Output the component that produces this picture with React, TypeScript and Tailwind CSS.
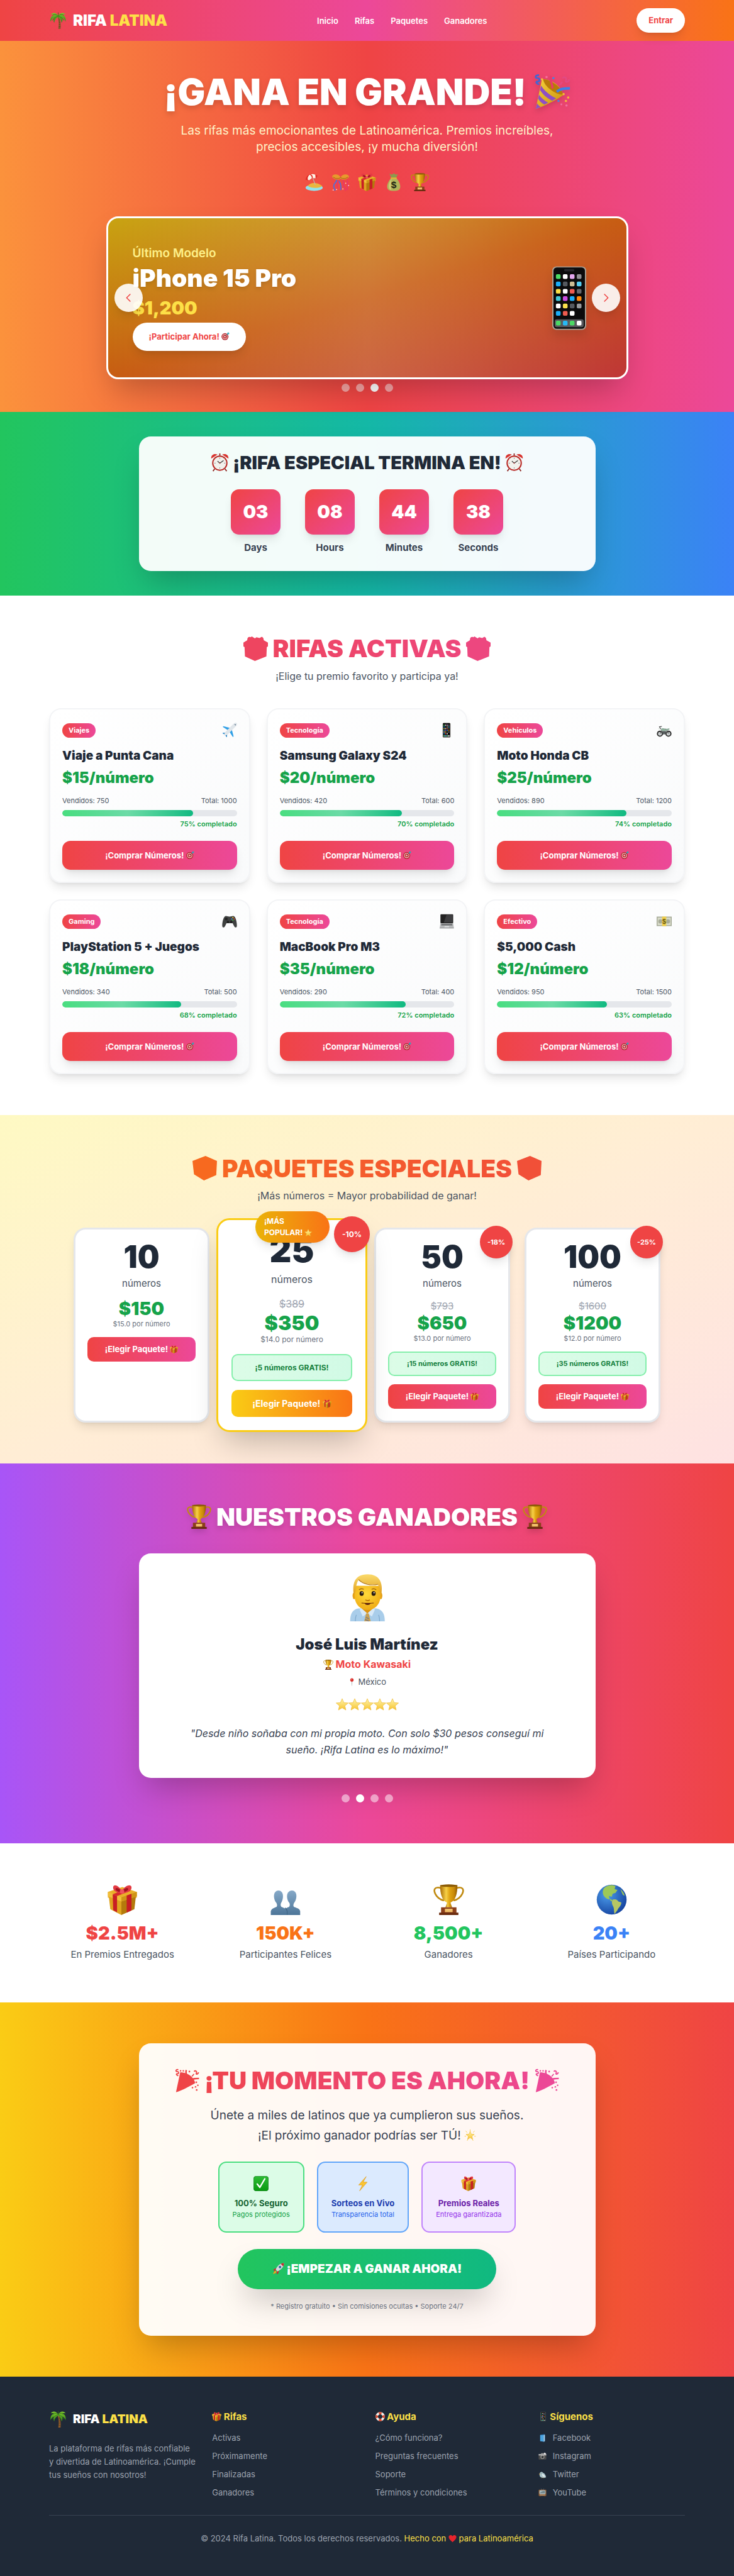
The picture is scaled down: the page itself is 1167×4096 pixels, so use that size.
import React from 'react';

/* ------------------------------------------------------------------ */
/* Icons: small colour drawings on a 32 x 32 grid                      */
/* ------------------------------------------------------------------ */

function Defs() {
  return (
    <svg width="0" height="0" className="absolute" aria-hidden="true">
      <defs>
        <linearGradient id="gold" x1="0" x2="1">
          <stop offset="0" stopColor="#a86b05" />
          <stop offset=".35" stopColor="#f7d046" />
          <stop offset=".55" stopColor="#e0a412" />
          <stop offset=".8" stopColor="#c98a08" />
          <stop offset="1" stopColor="#8f5a04" />
        </linearGradient>
        <linearGradient id="cone" x1="0" x2="1" y1="0" y2="1">
          <stop offset="0" stopColor="#f6d33c" />
          <stop offset="1" stopColor="#c98f0c" />
        </linearGradient>
        <linearGradient id="star" x1="0" x2="0" y1="0" y2="1">
          <stop offset="0" stopColor="#fff6b0" />
          <stop offset="1" stopColor="#f7c32e" />
        </linearGradient>
        <linearGradient id="steel" x1="0" x2="0" y1="0" y2="1">
          <stop offset="0" stopColor="#86a9c8" />
          <stop offset="1" stopColor="#4d7598" />
        </linearGradient>
        <linearGradient id="leaf" x1="0" x2="0" y1="0" y2="1">
          <stop offset="0" stopColor="#7fc52e" />
          <stop offset="1" stopColor="#2f8517" />
        </linearGradient>
        <radialGradient id="sea" cx=".35" cy=".35" r=".75">
          <stop offset="0" stopColor="#4b9bea" />
          <stop offset="1" stopColor="#123f9c" />
        </radialGradient>
        <radialGradient id="face" cx=".45" cy=".35" r=".75">
          <stop offset="0" stopColor="#ffd93a" />
          <stop offset="1" stopColor="#eda50f" />
        </radialGradient>
        <linearGradient id="hair" x1="0" x2="0" y1="0" y2="1">
          <stop offset="0" stopColor="#fbdb6c" />
          <stop offset="1" stopColor="#dd9a1c" />
        </linearGradient>
        <linearGradient id="check" x1="0" x2="0" y1="0" y2="1">
          <stop offset="0" stopColor="#2dbb35" />
          <stop offset="1" stopColor="#08990f" />
        </linearGradient>
      </defs>
    </svg>
  );
}

const icons = {
  palm: (
    <>
      <path d="M15 10c2 6 2.600 13 1.200 21h4c.8-8 0-15-3-21z" fill="#8a5a2b" />
      <path d="M17 15l2 .3M17.300 19l2.300.2M17.300 23l2.500.1M17 27l3 .1" stroke="#5f3c18" strokeWidth=".8" />
      <path
        d="M16 8C13 2 6 1 3 6c3-1 5 0 6 1-4 0-7 4-6.500 11 2-4 4-6 6-6.500-1 3-1 6 .5 8.500C10 15 12 12 16 10c3 2 5 5 6 10 2-3 2-6 1-8.500 3 1 5 3 6 7C30 12 28 7 23 7c1-1 3-2 6-1C26 1 19 2 16 8z"
        fill="url(#leaf)"
      />
      <path d="M16 9c-3-4-7-4-10-2M16 9c3-4 7-4 10-2M15 9c-4 1-7 3-9 7M17 9c4 1 7 3 9 7M16 9V2" stroke="#2b7414" strokeWidth=".9" fill="none" />
    </>
  ),
  party: (
    <>
      <path d="M7 5L1.500 31c5-1.500 16-6.500 24-12C24 11 16 5 7 5z" fill="url(#cone)" />
      <path d="M8 5c7 0 16 7 17.500 13.500C20 19 9 12 8 5z" fill="#b87a09" />
      <path d="M6.200 10.500C9 15 13 18.500 19.500 21.800l-3.500 2C10.500 21 7.500 18 5.300 14.500zM4.400 18.500c1.800 2.800 4.500 5.200 8 7l-3.200 1.700c-2.400-1.400-4.300-3-5.600-5.200zM2.700 26c.8 1.400 2 2.500 3.300 3.200l-4.500 1.800z" fill="#8e4fc4" />
      <path d="M16 13c1-4-3-6-1-11" stroke="#e9386a" strokeWidth="1.800" fill="none" />
      <path d="M20 16c3-3 7-3 11.500-3" stroke="#3d7fe8" strokeWidth="2.200" fill="none" />
      <path d="M4.500 1.500C1 1 .5 4 3 4s2.500 3 0 3 .5 3 1.500 2" stroke="#3f66d6" strokeWidth="1.500" fill="none" />
      <path d="M25 4c2-2 4 0 3 2s2 2 3-1M22 10c2 0 2-3 3-2" stroke="#e24a84" strokeWidth="1.300" fill="none" />
      <g fill="#f4b83c">
        <circle cx="7" cy="5" r="1" />
        <circle cx="26" cy="18" r="1" />
        <circle cx="30" cy="21" r="1" />
        <circle cx="28" cy="24" r="1" />
      </g>
      <g fill="#f26fa0">
        <circle cx="11" cy="3" r="1" />
        <circle cx="28.500" cy="28" r="1" />
        <circle cx="24" cy="27" r=".8" />
      </g>
      <circle cx="17" cy="4" r="1" fill="#4a82e0" />
      <circle cx="21.500" cy="24" r="1" fill="#4a82e0" />
    </>
  ),
  partyShape: (
    <g fill="currentColor" stroke="none">
      <path d="M7 5L1.500 31c5-1.500 16-6.500 25-12C25 11 16 5 7 5z" />
      <g fill="none" stroke="currentColor">
        <path d="M16 13c1-4-3-6-1-11M20 16c3-3 7-3 11.500-3" strokeWidth="2" />
        <path d="M4.500 1.500C1 1 .5 4 3 4s2.500 3 0 3 .5 3 1.500 2M25 4c2-2 4 0 3 2s2 2 3-1M22 10c2 0 2-3 3-2" strokeWidth="1.500" />
      </g>
      <circle cx="11" cy="3" r="1" />
      <circle cx="7.500" cy="3" r="1" />
      <circle cx="19" cy="4" r="1.100" />
      <circle cx="28" cy="18" r="1.100" />
      <circle cx="30" cy="22" r="1" />
      <circle cx="27" cy="24" r="1" />
      <circle cx="28.500" cy="28" r="1.100" />
      <circle cx="23" cy="25" r="1" />
    </g>
  ),
  beach: (
    <>
      <ellipse cx="16" cy="26" rx="15" ry="5.500" fill="#8fe3ee" />
      <path d="M5 23c3-6 16-8 25 0-4 4-20 4.500-25 0z" fill="#eab53e" />
      <path d="M13 7l5 14" stroke="#b9b9b9" strokeWidth="1.200" />
      <path d="M1 12C2 2 13-1 22 5l-3 5-7-1-6 5c-1-2-3-2-5-2z" fill="#e02c25" />
      <path d="M8 3c-3 3-4 6-3 9l2 1 5-4c0-3-2-5-4-6zM18 3C15 1.500 12 1.500 10 2.500c3 1 4 4 3.500 6.500l5 .5z" fill="#fff3e6" />
    </>
  ),
  confetti: (
    <>
      <path d="M1 7c1-6 12-6 15 1 3-7 14-7 15-1-4 5-11 6-15 3-4 3-11 2-15-3z" fill="#e8992d" />
      <path d="M3 7c3 3 9 4 13 1 4 3 10 2 13-1" stroke="#9c5a10" fill="none" />
      <path d="M9 12c0 6-5 5-5 11s3 3 2 8M12 13c3 4 6 8 4 17" stroke="#4b6fe0" strokeWidth="2" fill="none" />
      <path d="M13 13c-3 4-5 8-2 14M20 13c4 4-1 7 2 11s4 3 2 7M28 13v17" stroke="#e8346c" strokeWidth="1.800" fill="none" />
      <g fill="#ffd0d8">
        <circle cx="3" cy="30" r="1" />
        <circle cx="9" cy="29" r="1" />
        <circle cx="20" cy="28" r="1" />
        <circle cx="30" cy="22" r="1" />
        <circle cx="25" cy="18" r="1" />
      </g>
    </>
  ),
  gift: (
    <>
      <path d="M1 8l15-5 15 5v6H1z" fill="#eab02a" />
      <path d="M1.500 9L15 14.500V32L3.500 26z" fill="#e0a420" />
      <path d="M30.500 9L15 14.500V32l13.500-6z" fill="#b47a0c" />
      <path d="M1 8v4.500L15 18v-4.500zM31 8v4.500L15 18v-4.500z" fill="#f1be3c" />
      <path d="M15 13.500l16-5.500v4.500L15 18z" fill="#cf9517" />
      <path d="M6 10.500l4.500 1.800v17L6.500 27zM20.500 11.700l5-1.700v17.300l-5 2.300z" fill="#c81e24" />
      <path d="M6 10.500L20 5l4.500 1.800L10.500 12.300z" fill="#d8282c" />
      <path d="M15.500 7C12 1 7-.5 6.500 3s3 6 9 6.500C22 9 26 6.500 25.500 3S19 1 15.500 7z" fill="#e43b44" />
      <path d="M15.500 8C13 4 10 3 9 4.500s2.500 3.500 6.500 4c4-.5 7.500-2.500 6.500-4S18 4 15.500 8z" fill="#a1141f" />
      <circle cx="15.700" cy="7.500" r="2.300" fill="#ef5560" />
    </>
  ),
  giftShape: (
    <path
      fill="currentColor"
      d="M0 8l5-3c0-4 2-5 4.500-4L11 0l4 2.500L17 1l4 1 3-1.500c2 1 2.500 2.500 2.500 4.500L32 8v5l-1.500 1-.5 12-15 6-13-6L1.500 14 0 13z"
    />
  ),
  boxShape: <path fill="currentColor" d="M17 0L32 6.500 31 25 15 32 2 24 0 6.500z" />,
  money: (
    <>
      <path d="M9 1l4 2 4-2.500L20 3l4-1-3.500 7h-8z" fill="#8d9a4e" />
      <path d="M12 9h9c4 4 7 10 7 15 0 6-4 7.500-11.500 7.500S5 30 5 24c0-5 3-11 7-15z" fill="#b2b45a" />
      <path d="M13 10c-3 4-5 8-5 13 0 4 1 6 4 7-1-7-1-13 1-20z" fill="#d8d586" opacity=".8" />
      <rect x="11" y="8" width="11" height="2.500" rx="1.200" fill="#e3b438" />
      <text x="16.500" y="26.500" textAnchor="middle" fontSize="17" fontWeight="700" fontFamily="Liberation Sans" fill="#1f1f12">
        $
      </text>
    </>
  ),
  trophy: (
    <>
      <path d="M8 4C1 2 0 6 2 10s5 6 9 7M24 4c7-2 8 2 6 6s-5 6-9 7" stroke="#c08a10" strokeWidth="1.700" fill="none" />
      <path d="M7 1h18c0 9-2 16-7 18v3h-4v-3C9 17 7 10 7 1z" fill="url(#gold)" />
      <ellipse cx="16" cy="1.500" rx="9" ry="1.300" fill="#8c5b05" />
      <path d="M14 20h4l1.500 4h-7z" fill="url(#gold)" />
      <path d="M8 24h16v7H8z" fill="#8c3f1a" />
      <path d="M6 29.500h20V32H6z" fill="#6b2c10" />
      <path d="M12 25.500h8v3.500h-8z" fill="#f0bf6a" />
    </>
  ),
  phone: (
    <>
      <rect x="7.700" y=".5" width="16.600" height="31" rx="2" fill="#a9a196" />
      <rect x="8.300" y="1" width="15.400" height="30" rx="1.600" fill="#0b0b0c" />
      <rect x="13.500" y="1.800" width="5" height="1.100" rx=".5" fill="#26262b" />
      {[
        ['#4cd964', '#ffffff', '#e3a7ee', '#8e8e93'],
        ['#1badf8', '#55595f', '#cdbd94', '#55cdf2'],
        ['#fde047', '#ffffff', '#ef5c50', '#66696e'],
        ['#43c6d6', '#cc4ddf', '#1badf8', '#ff8a0c'],
        ['#ffffff', '#fbe04c', '#55595f', '#97999c'],
        ['#1badf8', '#ef5c50', '#ffffff', '#0b0b0c'],
      ].map((row, r) =>
        row.map((c, i) => (
          <rect key={`${r}-${i}`} x={9.500 + i * 3.400} y={4.300 + r * 3.600} width="2.300" height="2.300" rx=".6" fill={c} />
        )),
      )}
      <rect x="8.900" y="26.400" width="14.200" height="3.800" rx="1" fill="#5a5a5e" />
      {['#4cd964', '#27b9f5', '#4cd964', '#ffffff'].map((c, i) => (
        <rect key={i} x={9.500 + i * 3.400} y="27.100" width="2.300" height="2.300" rx=".6" fill={c} />
      ))}
    </>
  ),
  dart: (
    <>
      <circle cx="14" cy="18" r="13.500" fill="#b3252c" />
      <circle cx="14" cy="18" r="10" fill="#e9cfc9" />
      <circle cx="14" cy="18" r="7.500" fill="#c72c33" />
      <circle cx="14" cy="18" r="3" fill="#f3e7e2" />
      <path d="M14 18L25 7" stroke="#555" strokeWidth="2" />
      <path d="M22 10l1-6 5-4 .500 4 3.500.5-4 5z" fill="#2aa7b8" />
    </>
  ),
  clock: (
    <>
      <path d="M7 27l-3 4M25 27l3 4" stroke="#8f2a26" strokeWidth="2" />
      <path d="M1 9C0 3 6-1 12 2zM31 9c1-6-5-10-11-7z" fill="#d8332e" />
      <path d="M15 0h2v4h-2z" fill="#8f2a26" />
      <circle cx="16" cy="17" r="13.500" fill="#b92b27" />
      <circle cx="16" cy="17" r="11.300" fill="#f2f1ec" />
      <path d="M16 7.500v2M16 24.500v2M6.500 17h2M23.500 17h2" stroke="#777" />
      <path d="M16 17l-4-3.500M16 17l6.500-4.500" stroke="#333" strokeWidth="1.300" />
      <circle cx="16" cy="17" r="1" fill="#b92b27" />
    </>
  ),
  plane: (
    <>
      <path d="M20 12L3 7.500 1.500 9l14 9zM20 12l4.500 17 -1.500 1.500-9-14z" fill="#2f9fe6" />
      <path d="M9 21l-7 .5-1 1 6 3.500zM11 23l-.5 7-1 1L6 25z" fill="#2585c8" />
      <path d="M31 1c-2-1.500-5 0-7 2L7 20c-2 3-3 5-2 7 2 1 4 0 7-2L29 8c2-2 3.500-5 2-7z" fill="#dfe5ea" />
      <path d="M27 3.500l2 2" stroke="#4b6478" strokeWidth="1.800" />
    </>
  ),
  moto: (
    <>
      <circle cx="7" cy="23.500" r="6.500" fill="#2b2b2b" />
      <circle cx="7" cy="23.500" r="4" fill="#c9cdce" />
      <circle cx="25" cy="23.500" r="6.500" fill="#2b2b2b" />
      <circle cx="25" cy="23.500" r="4" fill="#c9cdce" />
      <path d="M8 23L12 14h8l5 9M9 20h13" stroke="#555" strokeWidth="2" fill="none" />
      <path d="M9 14c3-3 7-2 9 0l9-2v3l-9 3h-7z" fill="#8fb09d" />
      <path d="M11 18h9l-2 7h-5z" fill="#555b5c" />
      <path d="M9 14L6 9l5-1" stroke="#444" strokeWidth="1.600" fill="none" />
      <circle cx="5.500" cy="13" r="1.800" fill="#dfe7e0" />
    </>
  ),
  gamepad: (
    <>
      <path d="M7 5c3-1 5 1 9 1s6-2 9-1c4 1 7 14 6.500 21-.5 4-4 4-6 0l-3-6H9.500l-3 6c-2 4-5.500 4-6 0C0 19 3 6 7 5z" fill="#3f4140" />
      <circle cx="9" cy="11" r="3" fill="#232424" />
      <circle cx="12.500" cy="17" r="2.500" fill="#1d1e1e" />
      <circle cx="19.500" cy="17" r="2.500" fill="#1d1e1e" />
      <circle cx="23" cy="8" r="1.400" fill="#f0c22e" />
      <circle cx="26" cy="11" r="1.400" fill="#e04a32" />
      <circle cx="20.500" cy="11" r="1.400" fill="#3b87dd" />
      <circle cx="23" cy="13.500" r="1.400" fill="#46ad48" />
    </>
  ),
  laptop: (
    <>
      <rect x="3" y="1" width="27" height="19" rx="1.500" fill="#222" />
      <path d="M16 2h12.500v16.500H10z" fill="#3d3d3f" />
      <path d="M3 20h27l1.500 9.500H1.500z" fill="#b8babb" />
      <path d="M5 21.500h23l.5 3H4.500z" fill="#6b6d6f" />
      <path d="M12 26h9l.5 2.500h-10z" fill="#dcdedf" />
      <path d="M1.500 29.500h30v1.500h-30z" fill="#8b8d8f" />
    </>
  ),
  banknote: (
    <>
      <path d="M0 6h32v20H0z" fill="#a7ab98" />
      <rect x="2" y="8" width="28" height="16" fill="#d7dac8" />
      <circle cx="8" cy="16" r="4.500" fill="#a7ab98" />
      <circle cx="24" cy="16" r="4.500" fill="#a7ab98" />
      <path d="M11.500 6h9v20h-9z" fill="#efcf4b" />
      <text x="16" y="21" textAnchor="middle" fontSize="14" fontWeight="700" fontFamily="Liberation Sans" fill="#6b5a12">
        $
      </text>
    </>
  ),
  star: (
    <path
      d="M16 1.500l4.300 10.200 11 .9-8.400 7.200 2.600 10.700L16 24.800l-9.500 5.700 2.600-10.700L.7 12.600l11-.9z"
      fill="url(#star)"
      stroke="#eebc3a"
      strokeWidth="1.200"
    />
  ),
  man: (
    <>
      <path d="M4.800 31.200c0-5 1.600-7.700 5.400-8.400h11.600c3.900.7 5.600 3.400 5.600 8.400z" fill="#a9cdea" />
      <path d="M8.200 31.200c0-2 .2-3.200.7-4.200M24 31.200c0-2-.2-3.200-.7-4.200" stroke="#7fa9cc" strokeWidth=".5" fill="none" />
      <path d="M12.500 20h7v4.500L16 27l-3.500-2.500z" fill="#dd9413" />
      <path d="M12 22.500l4 3.500-3 2-2-4.500zM20 22.500L16 26l3 2 2-4.500z" fill="#d8e9f8" />
      <path d="M15.200 26h1.700l1.300 5.200H14z" fill="#c9a052" />
      <path d="M15 28.500l2 1M14.500 30l2.500 1" stroke="#6f7890" strokeWidth=".5" />
      <ellipse cx="7.400" cy="14.500" rx="1" ry="2.200" fill="#e5a018" />
      <ellipse cx="24.800" cy="14.500" rx="1" ry="2.200" fill="#e5a018" />
      <path d="M7.700 8h16.900v6.500c0 5.500-3.600 9.300-8.400 9.300s-8.500-3.800-8.500-9.300z" fill="url(#face)" />
      <path d="M7.200 14C6 6 8 .6 16 .5c8-.1 10.500 5.500 9.100 13.500l-1-2.500c0-2-.4-3.200-1.500-4.500-4 .6-9-.2-12.300-3C8.800 6.500 8.600 9 8.300 11.500z" fill="url(#hair)" />
      <path d="M10.300 4c3 3 8 4 12.600 3" stroke="#b87d18" strokeWidth=".5" fill="none" />
      <path d="M10.800 10.500c.8-.6 1.800-.6 2.700-.3M19 10.200c.9-.4 1.900-.3 2.600.3" stroke="#a4680f" strokeWidth=".6" fill="none" strokeLinecap="round" />
      <ellipse cx="12.300" cy="13" rx="1.350" ry="1.550" fill="#2a1c10" />
      <ellipse cx="20.100" cy="13" rx="1.350" ry="1.550" fill="#2a1c10" />
      <circle cx="12.600" cy="12.500" r=".4" fill="#fff" />
      <circle cx="20.400" cy="12.500" r=".4" fill="#fff" />
      <path d="M15 17.300c.7.500 1.600.5 2.400 0" stroke="#b9740a" strokeWidth=".7" fill="none" strokeLinecap="round" />
      <path d="M12.200 19.200c2.500.3 5.500.3 8 0" stroke="#8a4a0c" strokeWidth=".5" fill="none" />
      <path d="M14.200 19.300h4c-.4 1-1.200 1.200-2 1.200s-1.600-.2-2-1.200z" fill="#5a1f0c" />
    </>
  ),
  pin: (
    <>
      <path d="M15 14h2l-.5 17h-1z" fill="#8a8a8a" />
      <circle cx="16" cy="8" r="6.500" fill="#d9302c" />
      <circle cx="14" cy="6" r="1.800" fill="#f2807a" />
    </>
  ),
  people: (
    <>
      <path d="M1 32v-4c1-3 4-3.500 6-4.500 1-1 .5-3-.5-4.500C4 16 2.500 7 9 6.500c6.500.5 5 9.500 3 12.500-1 1.500-1 3.500 0 4.500 2 1 5 1.500 6 4.500v4z" fill="url(#steel)" />
      <path d="M14 32v-4c1-3 4-3.500 6-4.500 1-1 1-3 0-4.500-2.500-3-4-12 3-12.500 6.500.5 5 9.500 2.500 12.500-1 1.500-1.500 3.500-.5 4.500 2 1 6 1.500 6.500 4.500v4z" fill="url(#steel)" />
      <path d="M15.800 24.500c1 .8 2 2 2.200 3.500v3.800" stroke="#3f6585" strokeWidth=".7" fill="none" />
    </>
  ),
  globe: (
    <>
      <circle cx="16" cy="16" r="15.500" fill="url(#sea)" />
      <path d="M8 4c3-3 9-4 12-2l-1 3 3 1-2 3-3 1-1 3-3-1 1 4-3-1C8 13 5 9 8 4z" fill="#9dc857" />
      <path d="M14 15l2 1 1 2-2-.500z" fill="#9dc857" />
      <path d="M17 16c3-1 5 0 6 2l3 1c0 4-3 5-4 8l-3 4c-1-4 0-6-2-9-1-2-1-4 0-6z" fill="#b6c664" />
      <path d="M25 5c2 2 4 4 4.500 7l-2-1z" fill="#9dc857" />
    </>
  ),
  check: (
    <>
      <rect x=".5" y=".5" width="31" height="31" rx="5" fill="url(#check)" stroke="#0a7c12" />
      <path d="M8 17l5.500 7L24 6" stroke="#fff" strokeWidth="3.200" fill="none" strokeLinejoin="round" strokeLinecap="round" />
    </>
  ),
  bolt: <path d="M23 1L7 19h8L9 31.500 25 13h-8.500z" fill="#fbc531" stroke="#e09a1a" strokeWidth=".9" />,
  rocket: (
    <>
      <path d="M9 21c-4 1-6 5-7 9 4-1 8-2 9-6z" fill="#f8a01c" />
      <path d="M10 14l-7 4 1 4 6-2zM18 22l-3 8-4-1 2-7z" fill="#c72a30" />
      <path d="M31 1c-9 0-17 6-22 17l5 5C25 18 31 10 31 1z" fill="#d3dade" />
      <path d="M31 1c-3 0-6 .6-8.500 2l6.500 6.500C30.400 7 31 4 31 1z" fill="#c72a30" />
      <circle cx="20.500" cy="11.500" r="3.300" fill="#2a5fa0" />
    </>
  ),
  lifebuoy: (
    <>
      <circle cx="16" cy="16" r="11.500" fill="none" stroke="#f3f1ee" strokeWidth="8" />
      <g fill="none" stroke="#d9492e" strokeWidth="8">
        <path d="M11.600 5.400A11.500 11.500 0 0 1 20.400 5.400M26.600 11.600a11.500 11.500 0 0 1 0 8.800M20.400 26.600a11.500 11.500 0 0 1-8.800 0M5.400 20.400a11.500 11.500 0 0 1 0-8.800" />
      </g>
    </>
  ),
  book: (
    <>
      <path d="M7 4l16-3 3 3v24l-3 3L7 28z" fill="#2b76b5" />
      <path d="M7 4l14 1v26L7 28z" fill="#4aa3df" />
      <path d="M21 5l4-2v25l-4 3z" fill="#b9d4e6" />
    </>
  ),
  camera: (
    <>
      <rect x="1" y="8" width="30" height="21" rx="2" fill="#4b4b4b" />
      <path d="M1 8h30v5H1z" fill="#bdbdbd" />
      <path d="M11 4h10l2 5H9z" fill="#9a9a9a" />
      <path d="M23 2l7 3-3 5-6-3z" fill="#eeeeee" />
      <circle cx="16" cy="19" r="7.500" fill="#a7a7a7" />
      <circle cx="16" cy="19" r="5" fill="#2a2a2a" />
      <circle cx="14.500" cy="17.500" r="1.500" fill="#8aa" />
    </>
  ),
  bird: (
    <>
      <path d="M5 13c1-7 9-9 13-3 6 1 11 9 12 17-4 3-12 3-18 1-7-2-8-8-7-15z" fill="#a9c3c9" />
      <path d="M14 14c6 0 11 5 13 12-7 1-13-3-13-12z" fill="#dfeaec" />
      <path d="M6 12L1.500 15 6 16.500z" fill="#e0a434" />
      <circle cx="10" cy="12" r="1.200" fill="#222" />
      <path d="M14 28l-1 3M19 28l1 3" stroke="#c98d3a" strokeWidth="1.500" />
    </>
  ),
  tv: (
    <>
      <path d="M10 1l6 5 6-5" stroke="#a8a8a8" strokeWidth="1.300" fill="none" />
      <rect x="1" y="4" width="30" height="25" rx="2.500" fill="#8a5a34" />
      <rect x="4" y="7" width="24" height="14.500" rx="3" fill="#a9bcc0" />
      <path d="M6 18c3-6 9-9 20-9v9z" fill="#6f858a" />
      <path d="M5 25h22" stroke="#d9c29c" strokeWidth="2" />
      <path d="M5 29h4v2.500H5zM23 29h4v2.500h-4z" fill="#5a3a20" />
    </>
  ),
  heart: <path d="M16 30C6 22 1 16 1 10c0-8 11-11 15-3 4-8 15-5 15 3 0 6-5 12-15 20z" fill="#e8242c" />,
  glow: (
    <>
      <path d="M16 0v5M4 4l4 4M28 4l-4 4M1 18h4M27 18h4M8 30l2-4M24 30l-2-4" stroke="#f8cf4c" strokeWidth="1.600" />
      <path d="M16 5l3 7.500 8 .6-6.200 5.200 2 8L16 22l-6.800 4.300 2-8L5 13.100l8-.6z" fill="url(#star)" stroke="#f0b72e" strokeWidth="1.200" />
    </>
  ),
};

type IconName = keyof typeof icons;

function Icon({ name, className = '' }: { name: IconName; className?: string }) {
  return (
    <svg
      viewBox="0 0 32 32"
      aria-hidden="true"
      className={`inline-block h-[1em] w-[1em] shrink-0 align-[-0.14em] ${className}`}
    >
      {icons[name]}
    </svg>
  );
}

/* ------------------------------------------------------------------ */
/* Data                                                                */
/* ------------------------------------------------------------------ */

const navLinks = ['Inicio', 'Rifas', 'Paquetes', 'Ganadores'];

const countdown = [
  ['03', 'Days'],
  ['08', 'Hours'],
  ['44', 'Minutes'],
  ['38', 'Seconds'],
];

const raffles: { tag: string; icon: IconName; title: string; price: number; sold: number; total: number; pct: number }[] = [
  { tag: 'Viajes', icon: 'plane', title: 'Viaje a Punta Cana', price: 15, sold: 750, total: 1000, pct: 75 },
  { tag: 'Tecnología', icon: 'phone', title: 'Samsung Galaxy S24', price: 20, sold: 420, total: 600, pct: 70 },
  { tag: 'Vehículos', icon: 'moto', title: 'Moto Honda CB', price: 25, sold: 890, total: 1200, pct: 74 },
  { tag: 'Gaming', icon: 'gamepad', title: 'PlayStation 5 + Juegos', price: 18, sold: 340, total: 500, pct: 68 },
  { tag: 'Tecnología', icon: 'laptop', title: 'MacBook Pro M3', price: 35, sold: 290, total: 400, pct: 72 },
  { tag: 'Efectivo', icon: 'banknote', title: '$5,000 Cash', price: 12, sold: 950, total: 1500, pct: 63 },
];

const packs = [
  { count: 10, price: 150, each: '15.0' },
  { count: 25, price: 350, each: '14.0', old: 389, off: 10, free: 5, popular: true },
  { count: 50, price: 650, each: '13.0', old: 793, off: 18, free: 15 },
  { count: 100, price: 1200, each: '12.0', old: 1600, off: 25, free: 35 },
];

const stats: { icon: IconName; value: string; label: string; color: string }[] = [
  { icon: 'gift', value: '$2.5M+', label: 'En Premios Entregados', color: 'text-[#ef4444]' },
  { icon: 'people', value: '150K+', label: 'Participantes Felices', color: 'text-[#f97316]' },
  { icon: 'trophy', value: '8,500+', label: 'Ganadores', color: 'text-[#22c55e]' },
  { icon: 'globe', value: '20+', label: 'Países Participando', color: 'text-[#3b82f6]' },
];

const features: { icon: IconName; title: string; text: string; box: string; head: string; body: string }[] = [
  { icon: 'check', title: '100% Seguro', text: 'Pagos protegidos', box: 'border-[#4ade80] bg-[#dcfce7]', head: 'text-[#166534]', body: 'text-[#16a34a]' },
  { icon: 'bolt', title: 'Sorteos en Vivo', text: 'Transparencia total', box: 'border-[#60a5fa] bg-[#dbeafe]', head: 'text-[#1e40af]', body: 'text-[#2563eb]' },
  { icon: 'gift', title: 'Premios Reales', text: 'Entrega garantizada', box: 'border-[#c084fc] bg-[#f3e8ff]', head: 'text-[#6b21a8]', body: 'text-[#9333ea]' },
];

const footerColumns: { icon: IconName; title: string; links: { text: string; icon?: IconName }[] }[] = [
  { icon: 'gift', title: 'Rifas', links: [{ text: 'Activas' }, { text: 'Próximamente' }, { text: 'Finalizadas' }, { text: 'Ganadores' }] },
  {
    icon: 'lifebuoy',
    title: 'Ayuda',
    links: [{ text: '¿Cómo funciona?' }, { text: 'Preguntas frecuentes' }, { text: 'Soporte' }, { text: 'Términos y condiciones' }],
  },
  {
    icon: 'phone',
    title: 'Síguenos',
    links: [
      { text: 'Facebook', icon: 'book' },
      { text: 'Instagram', icon: 'camera' },
      { text: 'Twitter', icon: 'bird' },
      { text: 'YouTube', icon: 'tv' },
    ],
  },
];

/* ------------------------------------------------------------------ */
/* Sections                                                            */
/* ------------------------------------------------------------------ */

const wrap = 'mx-auto w-full max-w-[1037px] px-[13px]';
const wideCard = 'mx-auto w-full max-w-[726px] rounded-[19px] shadow-2xl';

function Dots({ active, label }: { active: number; label: string }) {
  return (
    <div className="flex justify-center gap-[10px]">
      {[0, 1, 2, 3].map((i) => (
        <button
          key={i}
          type="button"
          aria-label={`${label} ${i + 1}`}
          className={`size-[13px] rounded-full ${i === active ? 'bg-white' : 'bg-white/50'}`}
        />
      ))}
    </div>
  );
}

function Header() {
  return (
    <header className="bg-linear-to-r/srgb from-[#ef4444] via-[#ec4899] to-[#f97316]">
      <div className={`${wrap} flex items-center justify-between py-[13px]`}>
        <a href="#inicio" className="flex items-center gap-[9px]">
          <Icon name="palm" className="text-[29px]" />
          <span className="text-[24px] leading-[29px] font-black text-white">
            RIFA <span className="text-[#fde047]">LATINA</span>
          </span>
        </a>
        <nav className="flex gap-[26px]">
          {navLinks.map((l) => (
            <a key={l} href={`#${l.toLowerCase()}`} className="text-[13px] leading-[20px] font-semibold text-white">
              {l}
            </a>
          ))}
        </nav>
        <button type="button" className="rounded-full bg-white px-[19px] py-[10px] text-[13px] leading-[19px] font-bold text-[#ef4444] shadow-lg">
          Entrar
        </button>
      </div>
    </header>
  );
}

function Arrow({ side }: { side: 'left' | 'right' }) {
  return (
    <button
      type="button"
      aria-label={side === 'left' ? 'Anterior' : 'Siguiente'}
      className={`absolute top-[104px] flex size-[45px] items-center justify-center rounded-full bg-white/90 text-[#ef4444] shadow-lg ${
        side === 'left' ? 'left-[10px]' : 'right-[10px]'
      }`}
    >
      <svg viewBox="0 0 24 24" className="size-[19px]" fill="none" stroke="currentColor" strokeWidth="2" strokeLinecap="round" strokeLinejoin="round">
        <path d={side === 'left' ? 'M15 19l-7-7 7-7' : 'M9 5l7 7-7 7'} />
      </svg>
    </button>
  );
}

function Hero() {
  return (
    <section id="inicio" className="bg-linear-to-r/srgb from-[#fb923c] via-[#ef4444] to-[#ec4899] px-[13px] pt-[52px] pb-[32px]">
      <div className="text-center">
        <h1 className="mb-[20px] text-[58px] leading-[58px] font-black text-white drop-shadow-lg">
          ¡GANA EN GRANDE! <Icon name="party" />
        </h1>
        <p className="mx-auto mb-[26px] max-w-[622px] text-[19px] leading-[26px] text-[#fef3c7]">
          Las rifas más emocionantes de Latinoamérica. Premios increíbles, precios accesibles, ¡y mucha diversión!
        </p>
        <div className="mb-[39px] flex h-[32px] items-center justify-center gap-[13px] text-[29px]">
          <Icon name="beach" />
          <Icon name="confetti" />
          <Icon name="gift" />
          <Icon name="money" />
          <Icon name="trophy" />
        </div>
      </div>
      <div className="relative mx-auto mb-[7px] max-w-[830px] overflow-hidden rounded-[19px] border-[3px] border-white bg-linear-to-br/srgb from-[#c8a311] via-[#c75c12] to-[#bf3636] shadow-2xl">
        <div className="flex h-[253px] items-center justify-between bg-linear-to-r/srgb from-white/0 via-white/15 to-white/0 px-[39px]">
          <div>
            <p className="mb-[6px] text-[19px] leading-[26px] font-semibold text-[#fef08a]">Último Modelo</p>
            <h2 className="mb-[13px] text-[39px] leading-[39px] font-black text-white drop-shadow-md">iPhone 15 Pro</h2>
            <p className="mb-[7px] text-[29px] leading-[32px] font-black text-[#fde047]">$1,200</p>
            <button type="button" className="rounded-full bg-white px-[26px] py-[13px] text-[13px] leading-[19px] font-bold text-[#ef4444] shadow-lg">
              ¡Participar Ahora! <Icon name="dart" />
            </button>
          </div>
          <Icon name="phone" className="text-[104px] drop-shadow-xl" />
        </div>
        <Arrow side="left" />
        <Arrow side="right" />
      </div>
      <Dots active={2} label="Diapositiva" />
    </section>
  );
}

function Countdown() {
  return (
    <section className="bg-linear-to-r/srgb from-[#22c55e] via-[#14b8a6] to-[#3b82f6] px-[13px] py-[39px]">
      <div className={`${wideCard} bg-white/95 px-[26px] py-[26px]`}>
        <h2 className="mb-[26px] text-center text-[29px] leading-[32px] font-black text-[#1f2937]">
          <Icon name="clock" /> ¡RIFA ESPECIAL TERMINA EN! <Icon name="clock" />
        </h2>
        <div className="flex justify-center gap-[39px]">
          {countdown.map(([n, label]) => (
            <div key={label} className="w-[79px] text-center">
              <div className="rounded-[13px] bg-linear-to-br/srgb from-[#ef4444] to-[#ec4899] py-[20px] text-[29px] leading-[32px] font-black text-white shadow-lg">
                {n}
              </div>
              <p className="mt-[9px] text-[15px] leading-[23px] font-bold text-[#374151]">{label}</p>
            </div>
          ))}
        </div>
      </div>
    </section>
  );
}

function Raffles() {
  return (
    <section id="rifas" className="bg-white pt-[64px] pb-[65px]">
      <div className={wrap}>
        <div className="mb-[39px] text-center">
          <h2 className="mb-[13px] bg-linear-to-r/srgb from-[#ef4444] to-[#ec4899] bg-clip-text text-[39px] leading-[39px] font-black text-transparent">
            <Icon name="giftShape" className="text-[#ee4560]" /> RIFAS ACTIVAS <Icon name="giftShape" className="text-[#ed477f]" />
          </h2>
          <p className="text-[16px] leading-[23px] text-[#4b5563]">¡Elige tu premio favorito y participa ya!</p>
        </div>
        <div className="grid grid-cols-3 gap-[26px]">
          {raffles.map((r) => (
            <article key={r.title} className="rounded-[19px] border-2 border-[#f3f4f6] bg-linear-to-br/srgb from-white to-[#f9fafb] p-[19px] shadow-lg">
              <div className="mb-[13px] flex items-center justify-between">
                <span className="rounded-full bg-linear-to-r/srgb from-[#ef4444] to-[#ec4899] px-[10px] py-[3px] text-[11px] leading-[17px] font-bold text-white">
                  {r.tag}
                </span>
                <span className="flex h-[29px] items-center text-[24px]">
                  <Icon name={r.icon} />
                </span>
              </div>
              <h3 className="mb-[7px] text-[19px] leading-[26px] font-black text-[#1f2937]">{r.title}</h3>
              <p className="mb-[14px] text-[24px] leading-[29px] font-black text-[#16a34a]">${r.price}/número</p>
              <div className="mb-[7px] flex justify-between text-[11px] leading-[16px] text-[#4b5563]">
                <span>Vendidos: {r.sold}</span>
                <span>Total: {r.total}</span>
              </div>
              <div className="h-[10px] overflow-hidden rounded-full bg-[#e5e7eb]">
                <div className="h-full rounded-full bg-linear-to-r/srgb from-[#4ade80] to-[#10b981]" style={{ width: `${r.pct}%` }}>
                  <div className="h-full rounded-full bg-linear-to-r/srgb from-white/0 via-white/30 to-white/0" />
                </div>
              </div>
              <p className="mt-[4px] mb-[19px] text-right text-[11px] leading-[16px] font-semibold text-[#16a34a]">{r.pct}% completado</p>
              <button
                type="button"
                className="w-full rounded-[13px] bg-linear-to-r/srgb from-[#ef4444] to-[#ec4899] py-[13px] text-[13px] leading-[20px] font-bold text-white shadow-lg"
              >
                ¡Comprar Números! <Icon name="dart" />
              </button>
            </article>
          ))}
        </div>
      </div>
    </section>
  );
}

function Pack({ pack }: { pack: (typeof packs)[number] }) {
  const big = pack.popular;
  return (
    <article
      className={`relative border-[3px] bg-white text-center ${
        big ? 'z-10 -mx-[12px] -my-[15px] rounded-[21px] border-[#facc15] p-[21px] shadow-2xl' : 'rounded-[19px] border-[#e5e7eb] p-[19px] shadow-lg'
      }`}
    >
      {big && (
        <span className="absolute -top-[14px] left-[59px] w-[118px] rounded-[25px] bg-linear-to-r/srgb from-[#eab308] to-[#f97316] px-[14px] py-[7px] text-left text-[12px] leading-[18px] font-bold text-white shadow-lg">
          ¡MÁS POPULAR! <Icon name="star" />
        </span>
      )}
      {pack.off && (
        <span
          className={`absolute flex items-center justify-center rounded-full bg-[#ef4444] font-bold text-white shadow-lg ${
            big ? '-top-[6px] -right-[7px] size-[57px] text-[12px]' : '-top-[6px] -right-[7px] size-[52px] text-[11px]'
          }`}
        >
          -{pack.off}%
        </span>
      )}
      <p className={`font-black text-[#1f2937] ${big ? 'mb-[7px] text-[54px] leading-[54px]' : 'mb-[6px] text-[49px] leading-[49px]'}`}>{pack.count}</p>
      <p className={`text-[#4b5563] ${big ? 'mb-[14px] text-[16px] leading-[25px]' : 'mb-[13px] text-[15px] leading-[23px]'}`}>números</p>
      {pack.old && (
        <p className={`text-[#9ca3af] line-through ${big ? 'text-[16px] leading-[25px]' : 'text-[15px] leading-[23px]'}`}>${pack.old}</p>
      )}
      <p className={`font-black text-[#16a34a] ${big ? 'text-[32px] leading-[35px]' : 'text-[29px] leading-[32px]'}`}>${pack.price}</p>
      <p className={`text-[#6b7280] ${big ? 'mb-[14px] text-[12px] leading-[18px]' : 'mb-[13px] text-[11px] leading-[16px]'}`}>
        ${pack.each} por número
      </p>
      {pack.free && (
        <p
          className={`rounded-[10px] border-2 border-[#86efac] bg-linear-to-r/srgb from-[#dcfce7] to-[#d1fae5] font-bold text-[#15803d] ${
            big ? 'mb-[14px] py-[11px] text-[12px] leading-[17px]' : 'mb-[13px] py-[10px] text-[11px] leading-[15px]'
          }`}
        >
          ¡{pack.free} números GRATIS!
        </p>
      )}
      <button
        type="button"
        className={`w-full rounded-[10px] font-bold text-white ${
          big
            ? 'bg-linear-to-r/srgb from-[#facc15] to-[#f97316] py-[11px] text-[14px] leading-[21px]'
            : 'bg-linear-to-r/srgb from-[#ef4444] to-[#ec4899] py-[10px] text-[13px] leading-[19px]'
        }`}
      >
        ¡Elegir Paquete! <Icon name="gift" />
      </button>
    </article>
  );
}

function Packs() {
  return (
    <section id="paquetes" className="bg-linear-to-br/srgb from-[#fef9c3] via-[#ffedd5] to-[#fee2e2] py-[65px]">
      <div className={wrap}>
        <div className="mb-[39px] text-center">
          <h2 className="mb-[13px] bg-linear-to-r/srgb from-[#f97316] to-[#ef4444] bg-clip-text text-[39px] leading-[39px] font-black text-transparent">
            <Icon name="boxShape" className="text-[#f7691f]" /> PAQUETES ESPECIALES <Icon name="boxShape" className="text-[#f15038]" />
          </h2>
          <p className="text-[16px] leading-[23px] text-[#4b5563]">¡Más números = Mayor probabilidad de ganar!</p>
        </div>
        <div className="mx-auto grid max-w-[933px] grid-cols-4 gap-[23px]">
          {packs.map((p) => (
            <Pack key={p.count} pack={p} />
          ))}
        </div>
      </div>
    </section>
  );
}

function Winners() {
  return (
    <section id="ganadores" className="bg-linear-to-r/srgb from-[#a855f7] via-[#ec4899] to-[#ef4444] px-[13px] py-[65px]">
      <h2 className="mb-[39px] text-center text-[39px] leading-[39px] font-black text-white drop-shadow-lg">
        <Icon name="trophy" /> NUESTROS GANADORES <Icon name="trophy" />
      </h2>
      <div className={`${wideCard} mb-[26px] bg-white p-[32px] text-center`}>
        <div className="mb-[20px] flex justify-center text-[78px]">
          <Icon name="man" />
        </div>
        <h3 className="mb-[6px] text-[24px] leading-[29px] font-black text-[#1f2937]">José Luis Martínez</h3>
        <p className="mb-[6px] text-[16px] leading-[23px] font-bold text-[#ef4444]">
          <Icon name="trophy" /> Moto Kawasaki
        </p>
        <p className="mb-[13px] text-[13px] leading-[20px] text-[#4b5563]">
          <Icon name="pin" /> México
        </p>
        <div className="mb-[20px] flex h-[26px] items-center justify-center text-[20px]" role="img" aria-label="5 estrellas">
          {[0, 1, 2, 3, 4].map((i) => (
            <Icon key={i} name="star" />
          ))}
        </div>
        <p className="mx-auto max-w-[600px] text-[16px] leading-[26px] text-[#374151] italic">
          "Desde niño soñaba con mi propia moto. Con solo $30 pesos conseguí mi sueño. ¡Rifa Latina es lo máximo!"
        </p>
      </div>
      <Dots active={1} label="Ganador" />
    </section>
  );
}

function Stats() {
  return (
    <section className="bg-white py-[65px]">
      <div className={`${wrap} grid grid-cols-4 gap-[26px] text-center`}>
        {stats.map((s) => (
          <div key={s.label}>
            <div className="mb-[13px] flex justify-center text-[49px]">
              <Icon name={s.icon} />
            </div>
            <p className={`mb-[6px] text-[29px] leading-[32px] font-black ${s.color}`}>{s.value}</p>
            <p className="text-[15px] leading-[23px] text-[#4b5563]">{s.label}</p>
          </div>
        ))}
      </div>
    </section>
  );
}

function CallToAction() {
  return (
    <section className="bg-linear-to-r/srgb from-[#facc15] via-[#f97316] to-[#ef4444] px-[13px] py-[65px]">
      <div className={`${wideCard} bg-white/95 p-[39px] text-center`}>
        <h2 className="mb-[20px] bg-linear-to-r/srgb from-[#ef4444] to-[#ec4899] bg-clip-text text-[39px] leading-[39px] font-black text-transparent">
          <Icon name="partyShape" className="text-[#ef4447]" /> ¡TU MOMENTO ES AHORA! <Icon name="partyShape" className="text-[#ec4896]" />
        </h2>
        <p className="mb-[25px] text-[19px] leading-[32px] text-[#374151]">
          Únete a miles de latinos que ya cumplieron sus sueños.
          <br />
          ¡El próximo ganador podrías ser TÚ! <Icon name="glow" />
        </p>
        <div className="mb-[26px] flex justify-center gap-[20px]">
          {features.map((f) => (
            <div key={f.title} className={`rounded-[13px] border-2 px-[21px] py-[19px] ${f.box}`}>
              <div className="mb-[6px] flex h-[29px] items-center justify-center text-[24px]">
                <Icon name={f.icon} />
              </div>
              <p className={`text-[13px] leading-[20px] font-bold ${f.head}`}>{f.title}</p>
              <p className={`text-[11px] leading-[16px] ${f.body}`}>{f.text}</p>
            </div>
          ))}
        </div>
        <button
          type="button"
          className="mb-[19px] rounded-full bg-linear-to-r/srgb from-[#22c55e] to-[#10b981] px-[55px] py-[19px] text-[19px] leading-[26px] font-black text-white shadow-2xl"
        >
          <Icon name="rocket" /> ¡EMPEZAR A GANAR AHORA!
        </button>
        <p className="text-[11px] leading-[16px] text-[#6b7280]">* Registro gratuito • Sin comisiones ocultas • Soporte 24/7</p>
      </div>
    </section>
  );
}

function Footer() {
  return (
    <footer className="bg-[#1f2937] pt-[52px] pb-[51px]">
      <div className={wrap}>
        <div className="mb-[26px] grid grid-cols-4 gap-[26px]">
          <div>
            <div className="mb-[20px] flex h-[32px] items-center gap-[9px]">
              <Icon name="palm" className="text-[29px]" />
              <span className="text-[19px] leading-[26px] font-black text-white">
                RIFA <span className="text-[#fde047]">LATINA</span>
              </span>
            </div>
            <p className="text-[13px] leading-[21px] text-[#9ca3af]">
              La plataforma de rifas más confiable y divertida de Latinoamérica. ¡Cumple tus sueños con nosotros!
            </p>
          </div>
          {footerColumns.map((c) => (
            <div key={c.title}>
              <h3 className="mb-[13px] text-[15px] leading-[23px] font-bold text-[#fde047]">
                <Icon name={c.icon} /> {c.title}
              </h3>
              <ul className="flex flex-col gap-[10px]">
                {c.links.map((l) => (
                  <li key={l.text} className="h-[19px]">
                    <a href="#inicio" className="flex items-center gap-[10px] text-[13px] leading-[19px] text-[#9ca3af]">
                      {l.icon && <Icon name={l.icon} />}
                      {l.text}
                    </a>
                  </li>
                ))}
              </ul>
            </div>
          ))}
        </div>
        <p className="border-t border-[#374151] pt-[26px] text-center text-[13px] leading-[20px] text-[#9ca3af]">
          © 2024 Rifa Latina. Todos los derechos reservados.{' '}
          <span className="text-[#fde047]">
            Hecho con <Icon name="heart" /> para Latinoamérica
          </span>
        </p>
      </div>
    </footer>
  );
}

export default function App() {
  return (
    <div className="bg-[#1f2937] font-['Inter',sans-serif]">
      <Defs />
      <Header />
      <main>
        <Hero />
        <Countdown />
        <Raffles />
        <Packs />
        <Winners />
        <Stats />
        <CallToAction />
      </main>
      <Footer />
    </div>
  );
}
